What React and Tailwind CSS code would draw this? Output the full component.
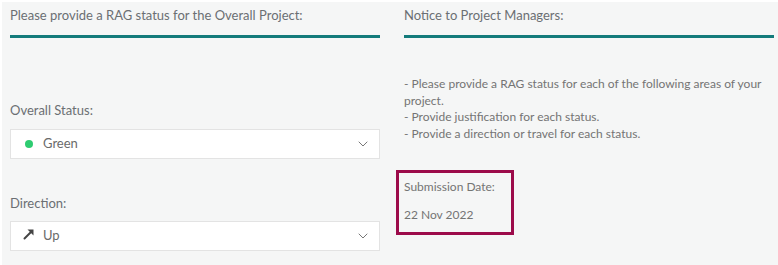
import React from 'react';
import { ChevronDown } from 'lucide-react';

const font = { fontFamily: 'Lato, "Open Sans", sans-serif' };

const Select = ({ icon, label }) => (
  <div className="flex h-[30px] items-center justify-between border border-[#e3e3e3] bg-white pl-[11px] pr-[8px]">
    <div className="flex items-center">
      <span className="flex w-[14px] justify-center">{icon}</span>
      <span className="ml-[7px] text-[13px] text-[#6a6a6a]">{label}</span>
    </div>
    <ChevronDown className="h-[16px] w-[16px] text-[#777]" strokeWidth={1.5} />
  </div>
);

const App = () => {
  return (
    <div
      className="flex h-[265px] w-[778px] border-t-2 border-l-2 border-white bg-[#f5f6f6] text-[#747474]"
      style={font}
    >
      {/* Left column */}
      <div className="ml-[8px] flex w-[370px] flex-col">
        <div className="flex h-[27px] items-center text-[13px] text-[#6b6f73]">
          Please provide a RAG status for the Overall Project:
        </div>
        <div className="mt-[6px] h-[3px] bg-[#137b7b]" />

        <div className="mt-[63px] text-[13px] text-[#6b6f73]">Overall Status:</div>
        <div className="mt-[8px]">
          <Select
            icon={<span className="h-[8px] w-[8px] rounded-full bg-[#2ecc71]" />}
            label="Green"
          />
        </div>

        <div className="mt-[35px] text-[13px] text-[#6b6f73]">Direction:</div>
        <div className="mt-[8px]">
          <Select
            icon={
              <svg width="12" height="12" viewBox="0 0 12 12" className="-mt-[4px]">
                <path d="M1.5 10.5 L9 3" stroke="#444" strokeWidth="2" strokeLinecap="round" />
                <path d="M4.5 1.5 H10.5 V7.5 Z" fill="#444" />
              </svg>
            }
            label="Up"
          />
        </div>
      </div>

      {/* Right column */}
      <div className="ml-[24px] flex w-[370px] flex-col">
        <div className="flex h-[27px] items-center text-[13px] text-[#6b6f73]">
          Notice to Project Managers:
        </div>
        <div className="mt-[6px] h-[3px] bg-[#137b7b]" />

        <div className="mt-[38px] text-[12px] leading-[16.5px] text-[#747474]">
          <p>- Please provide a RAG status for each of the following areas of your project.</p>
          <p>- Provide justification for each status.</p>
          <p>- Provide a direction or travel for each status.</p>
        </div>

        <div className="-ml-[8px] mt-[28px] w-[118px] border-[3px] border-[#9c0b4a] px-[5px] pt-[5px] pb-[8px] text-[12px] text-[#747474]">
          <div>Submission Date:</div>
          <div className="mt-[10px]">22 Nov 2022</div>
        </div>
      </div>
    </div>
  );
};

export default App;
